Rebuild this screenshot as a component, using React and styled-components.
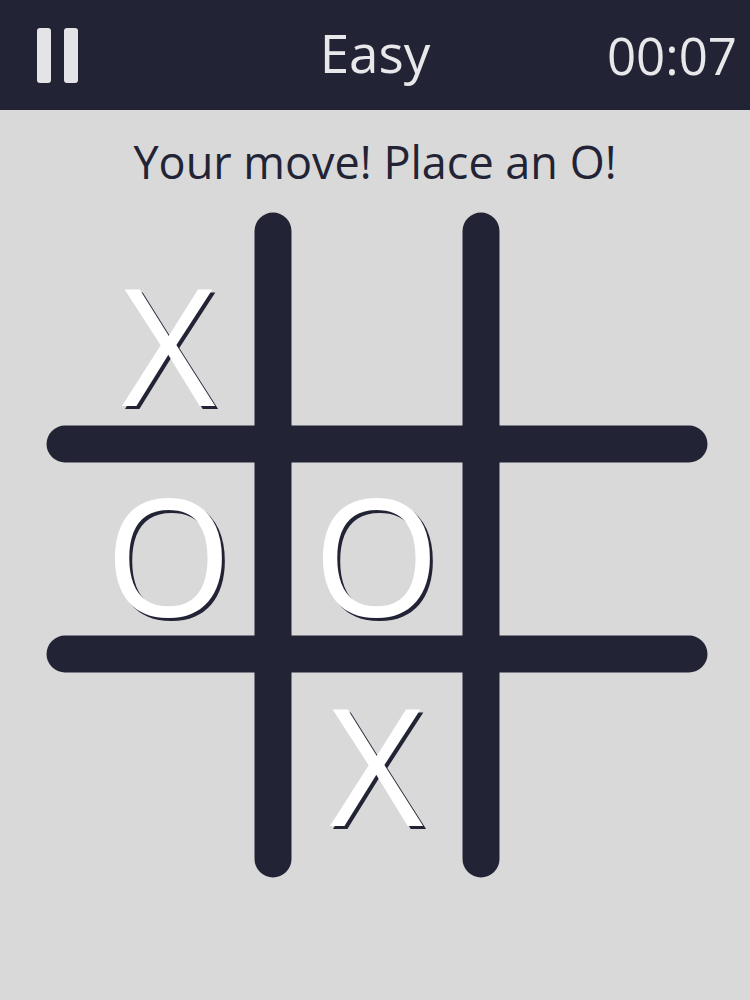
import React from "react";
import styled, { createGlobalStyle } from "styled-components";

const INK = "#222436";

const Global = createGlobalStyle`
  html, body { margin: 0; padding: 0; }
  body {
    background: #d9d9d9;
    font-family: "Open Sans", "Noto Sans", sans-serif;
    width: 750px;
    height: 1000px;
    overflow: hidden;
  }
`;

const Page = styled.div`
  width: 750px;
  height: 1000px;
  background: #d9d9d9;
  display: flex;
  flex-direction: column;
  align-items: center;
`;

const TopBar = styled.header`
  align-self: stretch;
  height: 110px;
  background: ${INK};
  display: grid;
  grid-template-columns: 1fr auto 1fr;
  align-items: center;
  padding: 0 13px;
  color: #e8e8ea;
`;

const PauseButton = styled.button`
  justify-self: start;
  display: flex;
  gap: 13px;
  background: none;
  border: 0;
  padding: 0;
  margin: 0 0 0 24px;
  cursor: pointer;
`;

const PauseBar = styled.span`
  display: block;
  width: 14px;
  height: 55px;
  border-radius: 3px;
  background: #e4e4e6;
`;

const Level = styled.div`
  font-size: 53px;
  line-height: 1;
  padding-bottom: 6px;
`;

const Timer = styled.div`
  justify-self: end;
  font-size: 51px;
  line-height: 1;
`;

const Message = styled.p`
  margin: 26px 0 0;
  font-size: 45px;
  line-height: 52px;
  color: ${INK};
`;

const Board = styled.div`
  position: relative;
  margin-top: 46px;
  margin-left: 3px;
  width: 624px;
  height: 630px;
`;

const GridLines = styled.svg`
  position: absolute;
  left: 0;
  top: 0;
  overflow: visible;
  pointer-events: none;
`;

const Cells = styled.div`
  position: relative;
  display: grid;
  grid-template-columns: repeat(3, 208px);
  grid-template-rows: repeat(3, 210px);
`;

const Cell = styled.div`
  display: flex;
  align-items: center;
  justify-content: center;
  padding-top: 8px;
  box-sizing: border-box;
  font-size: 163px;
  line-height: 1;
  color: #ffffff;
  text-shadow: 3px 3px 0 ${INK};
  user-select: none;
`;

const board = ["X", "", "", "O", "O", "", "", "X", ""];

export default function App() {
  return (
    <Page>
      <Global />
      <TopBar>
        <PauseButton aria-label="Pause">
          <PauseBar />
          <PauseBar />
        </PauseButton>
        <Level>Easy</Level>
        <Timer>00:07</Timer>
      </TopBar>
      <Message>Your move! Place an O!</Message>
      <Board>
        <GridLines width="624" height="630" viewBox="0 0 624 630">
          <g stroke={INK} strokeWidth="37" strokeLinecap="round">
            <line x1="208" y1="-3" x2="208" y2="625" />
            <line x1="416" y1="-3" x2="416" y2="625" />
            <line x1="0" y1="210" x2="624" y2="210" />
            <line x1="0" y1="420" x2="624" y2="420" />
          </g>
        </GridLines>
        <Cells>
          {board.map((v, i) => (
            <Cell key={i}>{v}</Cell>
          ))}
        </Cells>
      </Board>
    </Page>
  );
}
